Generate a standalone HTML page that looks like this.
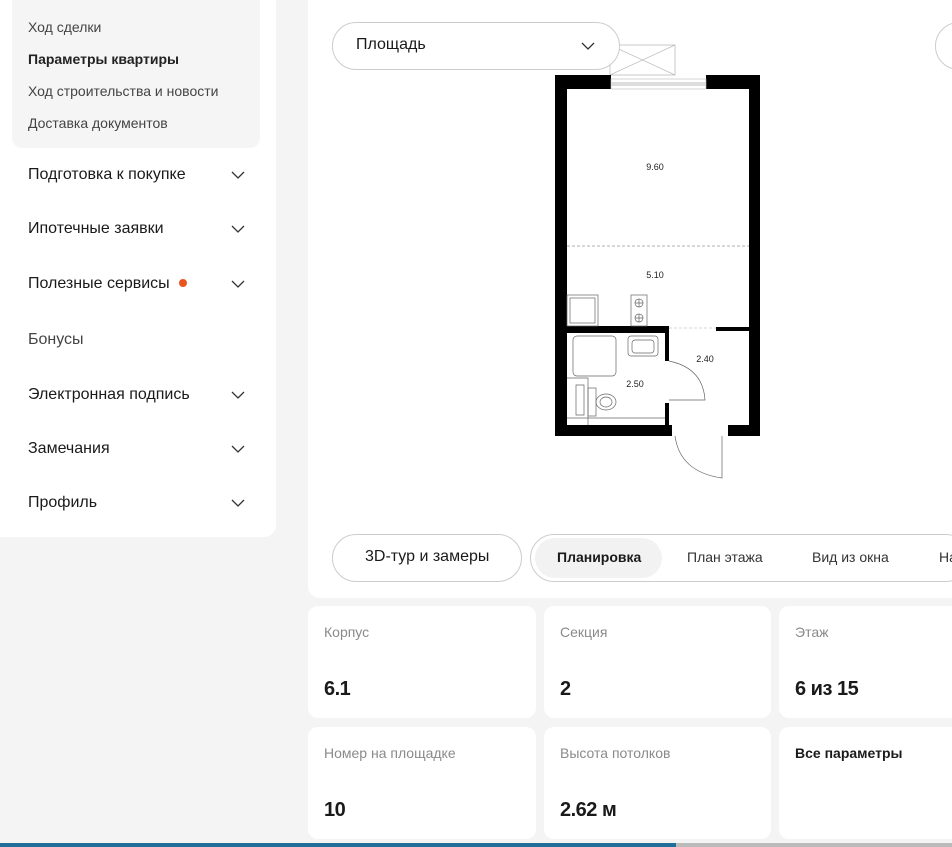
<!DOCTYPE html>
<html><head><meta charset="utf-8"><style>
*{margin:0;padding:0;box-sizing:border-box}
body{width:952px;height:847px;overflow:hidden;background:#f4f4f4;font-family:"Liberation Sans",sans-serif;color:#1a1a1a;position:relative}
.abs{position:absolute}
#left{left:0;top:-10px;width:276px;height:547px;background:#fff;border-radius:0 0 12px 0}
#sub{left:12px;top:-10px;width:248px;height:158px;background:#f5f5f5;border-radius:0 0 10px 10px}
.s{position:absolute;left:28px;font-size:14px;color:#444}
.m{position:absolute;left:28px;font-size:16px;color:#1a1a1a}
.chev{position:absolute;left:231px;width:14px;height:8px}
#main{left:308px;top:-10px;width:660px;height:608px;background:#fff;border-radius:0 0 12px 12px}
.card{position:absolute;background:#fff;border-radius:10px}
.lab{position:absolute;left:16px;top:18px;font-size:14px;color:#8a8a8a}
.val{position:absolute;left:16px;top:72px;font-size:20px;font-weight:bold;color:#1a1a1a;letter-spacing:-0.5px}
</style></head><body>
<div id="left" class="abs"></div>
<div id="sub" class="abs"></div>
<div class="s" style="top:19px">Ход сделки</div>
<div class="s" style="top:51px;color:#222;font-weight:bold">Параметры квартиры</div>
<div class="s" style="top:83px">Ход строительства и новости</div>
<div class="s" style="top:115px">Доставка документов</div>
<div class="m" style="top:166px">Подготовка к покупке</div>
<div class="m" style="top:220px">Ипотечные заявки</div>
<div class="m" style="top:275px">Полезные сервисы <span style="display:inline-block;width:8px;height:8px;border-radius:50%;background:#e8551e;margin-left:5px;vertical-align:1px"></span></div>
<div class="m" style="top:331px;color:#444">Бонусы</div>
<div class="m" style="top:386px">Электронная подпись</div>
<div class="m" style="top:440px">Замечания</div>
<div class="m" style="top:494px">Профиль</div>
<svg class="chev" style="top:171px" viewBox="0 0 14 8"><path d="M1 1l6 6 6-6" fill="none" stroke="#333" stroke-width="1.3"/></svg>
<svg class="chev" style="top:225px" viewBox="0 0 14 8"><path d="M1 1l6 6 6-6" fill="none" stroke="#333" stroke-width="1.3"/></svg>
<svg class="chev" style="top:280px" viewBox="0 0 14 8"><path d="M1 1l6 6 6-6" fill="none" stroke="#333" stroke-width="1.3"/></svg>
<svg class="chev" style="top:391px" viewBox="0 0 14 8"><path d="M1 1l6 6 6-6" fill="none" stroke="#333" stroke-width="1.3"/></svg>
<svg class="chev" style="top:445px" viewBox="0 0 14 8"><path d="M1 1l6 6 6-6" fill="none" stroke="#333" stroke-width="1.3"/></svg>
<svg class="chev" style="top:499px" viewBox="0 0 14 8"><path d="M1 1l6 6 6-6" fill="none" stroke="#333" stroke-width="1.3"/></svg>

<div id="main" class="abs"></div>
<svg class="abs" style="left:0;top:0" width="952" height="600">
<!-- balcony -->
<rect x="610" y="45" width="65" height="30" fill="none" stroke="#bbb" stroke-width="0.8"/>
<path d="M610 75L675 45M610 45L675 75" stroke="#bbb" stroke-width="0.7"/>
<!-- walls -->
<g fill="#000">
<rect x="555" y="75" width="56" height="14"/>
<rect x="706" y="75" width="54" height="14"/>
<rect x="555" y="75" width="12" height="361"/>
<rect x="749" y="75" width="11" height="361"/>
<rect x="555" y="425" width="117" height="11"/>
<rect x="728" y="425" width="32" height="11"/>
<rect x="555" y="326" width="113" height="7"/>
<rect x="665" y="326" width="4" height="35"/>
<rect x="665" y="403" width="4" height="33"/>
<rect x="716" y="327" width="34" height="4"/>
</g>
<rect x="611" y="79" width="95" height="10" fill="#fff" stroke="#bbb" stroke-width="0.6"/>
<rect x="611" y="82" width="95" height="4" fill="#ddd"/>
<path d="M567 246H749" stroke="#999" stroke-width="0.7" stroke-dasharray="3 2"/>
<path d="M669 328H716" stroke="#aaa" stroke-width="0.6" stroke-dasharray="3 2"/>
<g font-size="9" fill="#222" text-anchor="middle" font-family="Liberation Sans">
<text x="655" y="170">9.60</text><text x="655" y="278">5.10</text>
<text x="705" y="362">2.40</text><text x="635" y="387">2.50</text></g>
<g fill="none" stroke="#666" stroke-width="0.7">
<rect x="567" y="295" width="31" height="31"/><rect x="570" y="298" width="25" height="25"/>
<rect x="631" y="295" width="16" height="31"/>
<circle cx="639" cy="303" r="4"/><circle cx="639" cy="318" r="4"/>
<path d="M635 303h8M639 299v8M635 318h8M639 314v8"/>
<rect x="573" y="336" width="43" height="40" rx="4"/>
<rect x="628" y="336" width="30" height="20" rx="3"/><rect x="632" y="340" width="22" height="13" rx="3"/>
<path d="M567 378H588V425M576 385h8v30h-8z"/>
<rect x="588" y="388" width="8" height="28"/>
<ellipse cx="606" cy="402" rx="10" ry="8"/><ellipse cx="606" cy="402" rx="6" ry="5"/>
<path d="M567 418H665"/>
<path d="M669 361Q703 368 705 400H669"/>
<path d="M675 436Q680 472 722 478V436"/>
</g>
</svg>
<div class="abs" style="left:332px;top:22px;width:288px;height:48px;border:1px solid #ccc;border-radius:24px;background:#fff"></div>
<div class="abs" style="left:356px;top:36px;font-size:16px">Площадь</div>
<svg class="abs" style="left:581px;top:42px" width="14" height="8" viewBox="0 0 14 8"><path d="M1 1l6 6 6-6" fill="none" stroke="#333" stroke-width="1.3"/></svg>
<div class="abs" style="left:935px;top:22px;width:48px;height:48px;border:1px solid #ccc;border-radius:50%"></div>

<div class="abs" style="left:332px;top:534px;width:190px;height:48px;border:1px solid #ccc;border-radius:24px"></div>
<div class="abs" style="left:365px;top:548px;font-size:16px">3D-тур и замеры</div>
<div class="abs" style="left:530px;top:534px;width:440px;height:48px;border:1px solid #ccc;border-radius:24px"></div>
<div class="abs" style="left:535px;top:538px;width:127px;height:40px;background:#f2f2f2;border-radius:20px"></div>
<div class="abs" style="left:557px;top:549px;font-size:14px;font-weight:bold">Планировка</div>
<div class="abs" style="left:687px;top:549px;font-size:14px;color:#333">План этажа</div>
<div class="abs" style="left:812px;top:549px;font-size:14px;color:#333">Вид из окна</div>
<div class="abs" style="left:939px;top:549px;font-size:14px;color:#333">На</div>

<div class="card" style="left:308px;top:606px;width:228px;height:112px"><div class="lab">Корпус</div><div class="val">6.1</div></div>
<div class="card" style="left:544px;top:606px;width:227px;height:112px"><div class="lab">Секция</div><div class="val">2</div></div>
<div class="card" style="left:779px;top:606px;width:190px;height:112px"><div class="lab">Этаж</div><div class="val">6 из 15</div></div>
<div class="card" style="left:308px;top:727px;width:228px;height:112px"><div class="lab">Номер на площадке</div><div class="val">10</div></div>
<div class="card" style="left:544px;top:727px;width:227px;height:112px"><div class="lab">Высота потолков</div><div class="val">2.62 м</div></div>
<div class="card" style="left:779px;top:727px;width:190px;height:112px"><div class="lab" style="color:#1a1a1a;font-weight:bold">Все параметры</div></div>
<div class="abs" style="left:0;top:843px;width:676px;height:4px;background:#1f6f9a"></div>
<div class="abs" style="left:676px;top:843px;width:276px;height:4px;background:#bbb"></div>
</body></html>
